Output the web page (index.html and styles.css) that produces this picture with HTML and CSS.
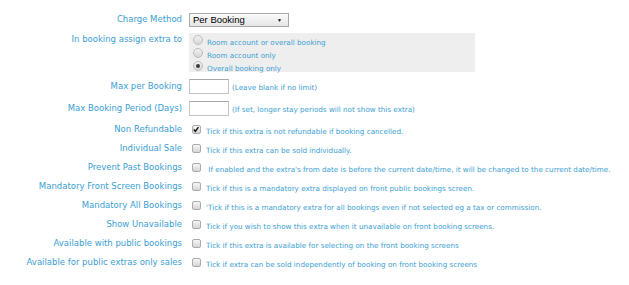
FILE: index.html
```html
<!DOCTYPE html>
<html>
<head>
<meta charset="utf-8">
<link rel="stylesheet" href="styles.css">
</head>
<body>
<div class="form">
  <div class="row row-select">
    <div class="label">Charge Method</div>
    <div class="ctrl">
      <div class="select"><span>Per Booking</span><span class="arrow">&#9660;</span></div>
    </div>
  </div>
  <div class="row row-radio">
    <div class="label">In booking assign extra to</div>
    <div class="ctrl">
      <div class="radiobox">
        <div class="radio-line"><span class="radio"></span><span class="rtext">Room account or overall booking</span></div>
        <div class="radio-line"><span class="radio"></span><span class="rtext">Room account only</span></div>
        <div class="radio-line"><span class="radio on"></span><span class="rtext">Overall booking only</span></div>
      </div>
    </div>
  </div>
  <div class="row row-input">
    <div class="label">Max per Booking</div>
    <div class="ctrl"><span class="input"></span><span class="hint">(Leave blank if no limit)</span></div>
  </div>
  <div class="row row-input">
    <div class="label">Max Booking Period (Days)</div>
    <div class="ctrl"><span class="input"></span><span class="hint">(If set, longer stay periods will not show this extra)</span></div>
  </div>
  <div class="row row-check">
    <div class="label">Non Refundable</div>
    <div class="ctrl"><span class="check on"><svg viewBox="0 0 9 9" width="9" height="9"><path d="M2 4.6 L3.8 6.6 L7.2 1.8" fill="none" stroke="#111" stroke-width="1.6"/></svg></span><span class="desc">Tick if this extra is not refundable if booking cancelled.</span></div>
  </div>
  <div class="row row-check">
    <div class="label">Individual Sale</div>
    <div class="ctrl"><span class="check"></span><span class="desc">Tick if this extra can be sold individually.</span></div>
  </div>
  <div class="row row-check">
    <div class="label">Prevent Past Bookings</div>
    <div class="ctrl"><span class="check"></span><span class="desc">&nbsp;If enabled and the extra's from date is before the current date/time, it will be changed to the current date/time.</span></div>
  </div>
  <div class="row row-check">
    <div class="label">Mandatory Front Screen Bookings</div>
    <div class="ctrl"><span class="check"></span><span class="desc">Tick if this is a mandatory extra displayed on front public bookings screen.</span></div>
  </div>
  <div class="row row-check">
    <div class="label">Mandatory All Bookings</div>
    <div class="ctrl"><span class="check"></span><span class="desc">'Tick if this is a mandatory extra for all bookings even if not selected eg a tax or commission.</span></div>
  </div>
  <div class="row row-check">
    <div class="label">Show Unavailable</div>
    <div class="ctrl"><span class="check"></span><span class="desc">Tick if you wish to show this extra when it unavailable on front booking screens.</span></div>
  </div>
  <div class="row row-check">
    <div class="label">Available with public bookings</div>
    <div class="ctrl"><span class="check"></span><span class="desc">Tick if this extra is available for selecting on the front booking screens</span></div>
  </div>
  <div class="row row-check">
    <div class="label">Available for public extras only sales</div>
    <div class="ctrl"><span class="check"></span><span class="desc">Tick if extra can be sold independently of booking on front booking screens</span></div>
  </div>
</div>
</body>
</html>
```
FILE: styles.css
```css
html, body {
  margin: 0;
  padding: 0;
  background: #ffffff;
}
body {
  font-family: "DejaVu Sans", Verdana, sans-serif;
  color: #3a9ed3;
}
.form {
  padding-top: 13px;
}
.row {
  display: flex;
  align-items: flex-start;
}
.label {
  width: 182px;
  padding-right: 7px;
  text-align: right;
  font-size: 8.5px;
  line-height: 12px;
  white-space: nowrap;
  flex: none;
}
.ctrl {
  display: flex;
  align-items: flex-start;
}
/* select */
.row-select {
  height: 14px;
  margin-bottom: 6px;
}
.row-select .label {
  padding-top: 0;
}
.select {
  box-sizing: border-box;
  width: 100px;
  height: 14px;
  border: 1px solid #a9a9a9;
  background: linear-gradient(#fafafa, #e6e6e6);
  font-family: "Liberation Sans", Arial, sans-serif;
  font-size: 9.5px;
  line-height: 12px;
  color: #000;
  padding-left: 3px;
  display: flex;
  justify-content: space-between;
}
.arrow {
  font-size: 5px;
  padding-right: 6px;
  line-height: 12px;
}
/* radios */
.row-radio {
  margin-bottom: 7px;
}
.radiobox {
  box-sizing: border-box;
  width: 286px;
  height: 39px;
  background: #eeeeee;
  padding-top: 2px;
  padding-left: 4px;
}
.radio-line {
  display: flex;
  align-items: flex-start;
  height: 13px;
}
.radio {
  box-sizing: border-box;
  width: 10px;
  height: 10px;
  border-radius: 50%;
  border: 1px solid #bdbdbd;
  background: linear-gradient(#f2f2f2, #d6d6d6);
  margin-right: 4px;
  position: relative;
  flex: none;
}
.radio.on::after {
  content: "";
  position: absolute;
  left: 2px;
  top: 2px;
  width: 4px;
  height: 4px;
  border-radius: 50%;
  background: #3a3a3a;
}
.rtext {
  font-size: 7.2px;
  line-height: 9px;
  padding-top: 3px;
}
/* inputs */
.row-input {
  height: 15px;
  margin-bottom: 7px;
}
.row-input .label {
  padding-top: 1px;
}
.input {
  box-sizing: border-box;
  width: 40px;
  height: 15px;
  border: 1px solid #c4c4c4;
  border-top-color: #a8a8a8;
  background: #fff;
  margin-right: 3px;
}
.hint {
  font-size: 7.2px;
  line-height: 9px;
  padding-top: 4px;
  white-space: nowrap;
}
/* checks */
.row-check {
  height: 18.95px;
}
.row-check:first-of-type {
  margin-top: 2px;
}
.check {
  box-sizing: border-box;
  width: 9px;
  height: 9px;
  border: 1px solid #ababab;
  border-radius: 2px;
  background: linear-gradient(#f6f6f6, #d5d5d5);
  margin-left: 3px;
  margin-right: 5px;
  margin-top: 2px;
  flex: none;
  display: flex;
}
.check svg {
  margin: -1px 0 0 -1px;
}
.desc {
  font-size: 7.2px;
  line-height: 9px;
  padding-top: 4px;
  white-space: nowrap;
}
```
